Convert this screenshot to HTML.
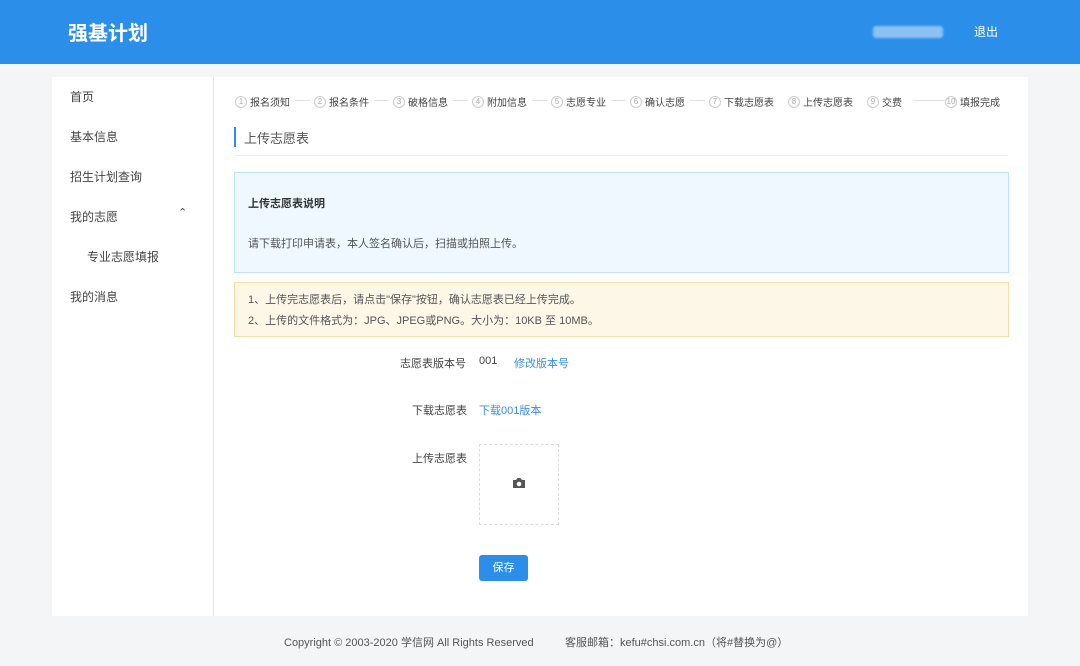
<!DOCTYPE html>
<html><head><meta charset="utf-8"><style>
*{margin:0;padding:0;box-sizing:border-box}
body{width:1080px;height:666px;background:#f4f5f6;font-family:"Liberation Sans","Noto Sans CJK SC",sans-serif;color:#444;position:relative;overflow:hidden}
.hd{position:absolute;left:0;top:0;width:1080px;height:64px;background:#2b8fe9}
.logo{position:absolute;left:68px;top:17px;color:#fff;font-size:20px;font-weight:bold}
.user{position:absolute;left:873px;top:26px;width:70px;height:12px;background:#8cc1f4;border-radius:3px;filter:blur(1px)}
.out{position:absolute;left:974px;top:23px;color:#fff;font-size:12px}
.panel{position:absolute;left:52px;top:77px;width:976px;height:539px;background:#fff}
.side{position:absolute;left:0;top:0;width:162px;height:539px;border-right:1px solid #e6e6e6}
.side div{position:absolute;left:18px;font-size:12px;color:#444}
.ab{position:absolute;font-size:12px}
.steps{position:absolute;left:183px;top:17px;font-size:10px;color:#444;white-space:nowrap}
.st{position:absolute;top:0;display:flex;align-items:center;background:#fff;padding-right:3px}
.st i{display:inline-block;width:12px;height:12px;border:1px solid #ccc;border-radius:50%;font-style:normal;font-size:8px;color:#aaa;text-align:center;line-height:10px;margin-right:3px}
.ln{position:absolute;top:6px;border-top:1px solid #e2e2e2}
</style></head><body>
<div class="hd"><div class="logo">强基计划</div><div class="user"></div><div class="out">退出</div></div>
<div class="panel">
<div class="side">
<div style="top:11px">首页</div>
<div style="top:51px">基本信息</div>
<div style="top:91px">招生计划查询</div>
<div style="top:131px">我的志愿</div>
<div style="top:129px;left:126px;font-size:11px">⌃</div>
<div style="top:171px;left:35px">专业志愿填报</div>
<div style="top:211px">我的消息</div>
</div>
<div class="steps">
<div class="ln" style="left:60px;width:15px"></div>
<div class="ln" style="left:139px;width:15px"></div>
<div class="ln" style="left:218px;width:15px"></div>
<div class="ln" style="left:297px;width:15px"></div>
<div class="ln" style="left:376px;width:15px"></div>
<div class="ln" style="left:455px;width:15px"></div>
<div class="ln" style="left:678px;width:32px"></div>
<div class="st" style="left:0"><i>1</i>报名须知</div>
<div class="st" style="left:79px"><i>2</i>报名条件</div>
<div class="st" style="left:158px"><i>3</i>破格信息</div>
<div class="st" style="left:237px"><i>4</i>附加信息</div>
<div class="st" style="left:316px"><i>5</i>志愿专业</div>
<div class="st" style="left:395px"><i>6</i>确认志愿</div>
<div class="st" style="left:474px"><i>7</i>下载志愿表</div>
<div class="st" style="left:553px"><i>8</i>上传志愿表</div>
<div class="st" style="left:632px"><i>9</i>交费</div>
<div class="st" style="left:710px"><i>10</i>填报完成</div>
</div>
<div style="position:absolute;left:182px;top:50px;width:2px;height:20px;background:#2b8fe9"></div>
<div class="ab" style="left:192px;top:51px;font-size:13px;color:#555">上传志愿表</div>
<div style="position:absolute;left:182px;top:78px;width:774px;border-top:1px solid #eee"></div>
<div style="position:absolute;left:182px;top:95px;width:775px;height:101px;background:#eef8fe;border:1px solid #bfe3f7"></div>
<div class="ab" style="left:196px;top:118px;font-size:11px;font-weight:bold;color:#333">上传志愿表说明</div>
<div class="ab" style="left:196px;top:158px;font-size:11px;color:#555">请下载打印申请表，本人签名确认后，扫描或拍照上传。</div>
<div style="position:absolute;left:182px;top:205px;width:775px;height:55px;background:#fdf7e8;border:1px solid #f6dfa7"></div>
<div class="ab" style="left:196px;top:214px;font-size:11px;color:#555">1、上传完志愿表后，请点击"保存"按钮，确认志愿表已经上传完成。</div>
<div class="ab" style="left:196px;top:235px;font-size:11px;color:#555">2、上传的文件格式为：JPG、JPEG或PNG。大小为：10KB 至 10MB。</div>
<div class="ab" style="left:348px;top:278px;font-size:11px">志愿表版本号</div>
<div class="ab" style="left:427px;top:278px;font-size:11px">001</div>
<div class="ab" style="left:462px;top:278px;font-size:11px;color:#3a8ee6">修改版本号</div>
<div class="ab" style="left:360px;top:325px;font-size:11px">下载志愿表</div>
<div class="ab" style="left:427px;top:325px;font-size:11px;color:#3a8ee6">下载001版本</div>
<div class="ab" style="left:360px;top:373px;font-size:11px">上传志愿表</div>
<div style="position:absolute;left:427px;top:367px;width:80px;height:81px;border:1px dashed #ddd"></div>
<svg style="position:absolute;left:460px;top:400px" width="14" height="12" viewBox="0 0 14 12"><path d="M1 3h3l1.5-2h3L10 3h3v8H1z" fill="#555"/><circle cx="7" cy="7" r="2.3" fill="#fff"/></svg>
<div style="position:absolute;left:427px;top:478px;width:49px;height:26px;background:#2b8fe9;border-radius:3px;color:#fff;font-size:11px;text-align:center;line-height:26px">保存</div>
</div>
<div class="ab" style="left:284px;top:634px;font-size:11px;color:#555">Copyright © 2003-2020 学信网 All Rights Reserved</div>
<div class="ab" style="left:565px;top:634px;font-size:11px;color:#555">客服邮箱：kefu#chsi.com.cn（将#替换为@）</div>
</body></html>
